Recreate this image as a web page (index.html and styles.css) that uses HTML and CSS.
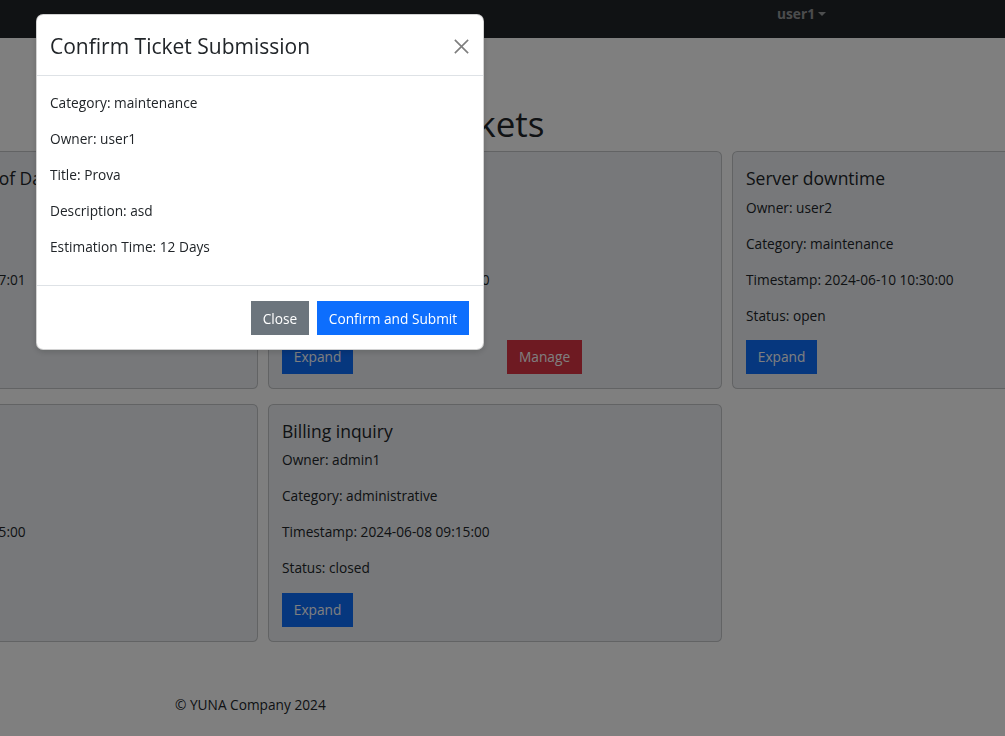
FILE: index.html
```html
<!DOCTYPE html>
<html lang="en">
<head>
<meta charset="utf-8">
<title>Tickets</title>
<link rel="stylesheet" href="styles.css">
</head>
<body>
<nav class="navbar">
  <div class="user-menu"><span class="user-name">user1</span><span class="caret"></span></div>
</nav>
<main class="page">
  <h1 class="page-title">All Tickets</h1>
  <div class="ticket-grid">
    <div class="card">
      <h5 class="card-title">Intermittent SMB loss of Data</h5>
      <p>Owner: user1</p>
      <p>Category: technical</p>
      <p>Timestamp: 2024-06-12 14:27:01</p>
      <p>Status: open</p>
      <div class="card-actions"><button class="btn btn-primary">Expand</button></div>
    </div>
    <div class="card">
      <h5 class="card-title">Login issue</h5>
      <p>Owner: user1</p>
      <p>Category: technical</p>
      <p>Timestamp: 2024-06-11 08:45:00</p>
      <p>Status: open</p>
      <div class="card-actions two-col">
        <div><button class="btn btn-primary">Expand</button></div>
        <div><button class="btn btn-danger">Manage</button></div>
      </div>
    </div>
    <div class="card">
      <h5 class="card-title">Server downtime</h5>
      <p>Owner: user2</p>
      <p>Category: maintenance</p>
      <p>Timestamp: 2024-06-10 10:30:00</p>
      <p>Status: open</p>
      <div class="card-actions"><button class="btn btn-primary">Expand</button></div>
    </div>
    <div class="card">
      <h5 class="card-title">Password reset</h5>
      <p>Owner: user3</p>
      <p>Category: technical</p>
      <p>Timestamp: 2024-06-09 16:45:00</p>
      <p>Status: open</p>
      <div class="card-actions"><button class="btn btn-primary">Expand</button></div>
    </div>
    <div class="card">
      <h5 class="card-title">Billing inquiry</h5>
      <p>Owner: admin1</p>
      <p>Category: administrative</p>
      <p>Timestamp: 2024-06-08 09:15:00</p>
      <p>Status: closed</p>
      <div class="card-actions"><button class="btn btn-primary">Expand</button></div>
    </div>
  </div>
</main>
<footer class="site-footer">© YUNA Company 2024</footer>

<div class="backdrop"></div>
<div class="modal" role="dialog">
  <div class="modal-header">
    <h4 class="modal-title">Confirm Ticket Submission</h4>
    <button class="btn-close" aria-label="Close">
      <svg viewBox="0 0 16 16" width="15" height="15"><path d="M1.5 1.5L14.5 14.5M14.5 1.5L1.5 14.5" stroke="#000" stroke-width="1.7" stroke-linecap="square"/></svg>
    </button>
  </div>
  <div class="modal-body">
    <p>Category: maintenance</p>
    <p>Owner: user1</p>
    <p>Title: Prova</p>
    <p>Description: asd</p>
    <p>Estimation Time: 12 Days</p>
  </div>
  <div class="modal-footer">
    <button class="btn btn-secondary">Close</button>
    <button class="btn btn-primary">Confirm and Submit</button>
  </div>
</div>
</body>
</html>
```
FILE: styles.css
```css
* { box-sizing: border-box; }

html, body { height: 100%; }

body {
  margin: 0;
  font-family: "Open Sans", "Noto Sans", sans-serif;
  font-size: 13.7px;
  line-height: 21.6px;
  color: #212529;
  background: #ffffff;
  overflow: hidden;
}

.navbar {
  height: 38px;
  background: #212529;
  display: flex;
  justify-content: flex-end;
  align-items: flex-start;
  padding: 3px 179px 0 0;
}

.user-menu {
  display: flex;
  align-items: center;
  gap: 3px;
  color: rgba(255, 255, 255, 0.55);
  font-weight: 700;
}

.caret {
  width: 0;
  height: 0;
  border-top: 4.3px solid rgba(255, 255, 255, 0.55);
  border-left: 4.3px solid transparent;
  border-right: 4.3px solid transparent;
}

.page {
  margin-left: -196px;
  width: 1382px;
  padding-top: 65px;
}

.page-title {
  margin: 0 0 6px;
  padding-right: 62px;
  font-size: 35px;
  line-height: 42px;
  font-weight: 500;
  text-align: center;
}

.ticket-grid {
  display: grid;
  grid-template-columns: repeat(3, 454px);
  column-gap: 10px;
  row-gap: 15px;
}

.card {
  background: #eef1f4;
  border: 1px solid rgba(0, 0, 0, 0.175);
  border-radius: 5.4px;
  padding: 15.8px 13px 13.6px;
}

.card-title {
  margin: 0 0 7.2px;
  font-size: 17.5px;
  line-height: 21.6px;
  font-weight: 500;
  white-space: nowrap;
}

.card p {
  margin: 0 0 14.4px;
  white-space: nowrap;
}

.card p:last-of-type {
  margin-bottom: 13.8px;
}

.card-actions { display: flex; }

.card-actions.two-col {
  display: grid;
  grid-template-columns: 1fr 1fr;
  column-gap: 24.5px;
}

.btn {
  font-family: inherit;
  font-size: 13.7px;
  line-height: 21.6px;
  padding: 5.4px 10.8px;
  border: 1px solid transparent;
  border-radius: 0;
  color: #fff;
  cursor: pointer;
}

.btn-primary { background: #0d6efd; border-color: #0d6efd; }
.btn-danger { background: #dc3545; border-color: #dc3545; }
.btn-secondary { background: #6c757d; border-color: #6c757d; }

.site-footer {
  margin-top: 52px;
  padding-left: 175px;
}

.backdrop {
  position: fixed;
  inset: 0;
  background: rgba(0, 0, 0, 0.5);
}

.modal {
  position: fixed;
  top: 14px;
  left: 36px;
  width: 448px;
  background: #fff;
  border: 1px solid rgba(0, 0, 0, 0.175);
  border-radius: 7.2px;
  box-shadow: 0 2px 6px rgba(0, 0, 0, 0.15);
}

.modal-header {
  height: 61px;
  padding: 2px 14px 0 13px;
  display: flex;
  align-items: center;
  justify-content: space-between;
  border-bottom: 1px solid #dee2e6;
}

.modal-title {
  margin: 0;
  font-size: 21px;
  line-height: 32px;
  font-weight: 500;
}

.btn-close {
  background: none;
  border: 0;
  padding: 0;
  width: 15px;
  height: 15px;
  opacity: 0.5;
  display: flex;
  cursor: pointer;
}

.modal-body {
  padding: 16px 13px 12.8px;
}

.modal-body p {
  margin: 0 0 14.4px;
}

.modal-footer {
  border-top: 1px solid #dee2e6;
  padding: 15.4px 14px 13.4px;
  display: flex;
  justify-content: flex-end;
  gap: 8px;
}
```
